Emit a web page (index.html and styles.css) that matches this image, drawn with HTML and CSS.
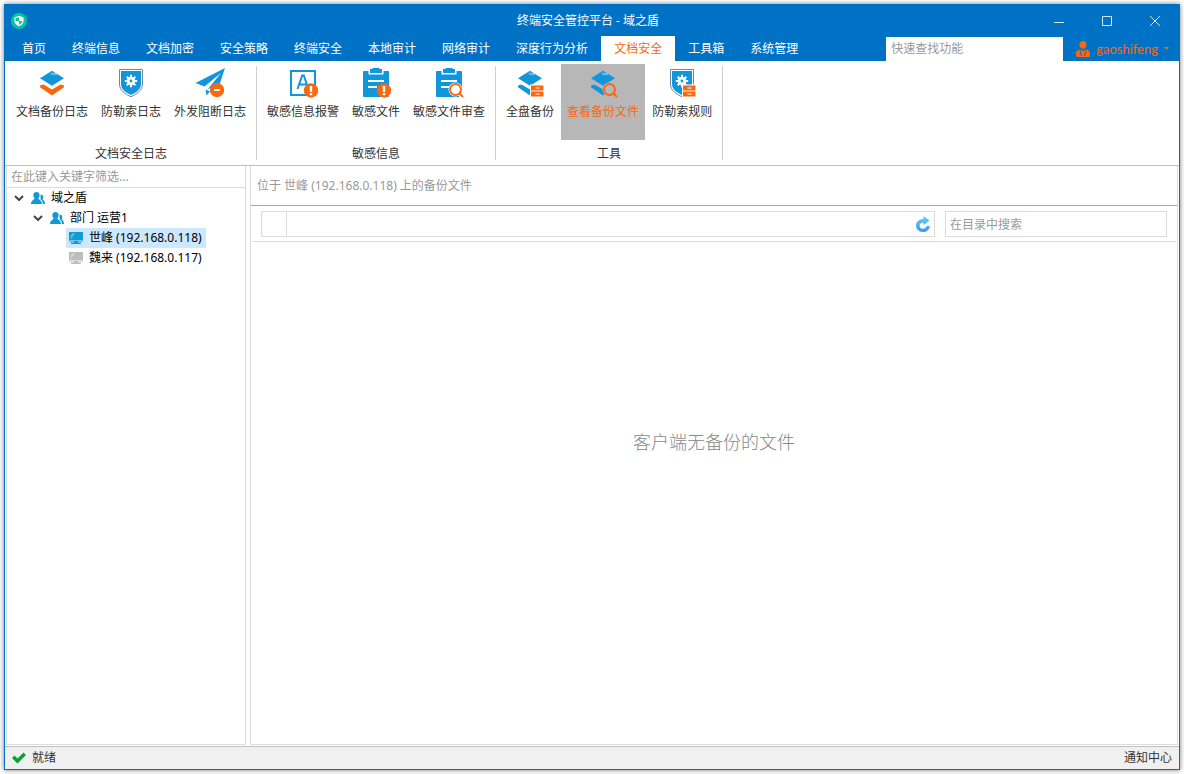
FILE: index.html
```html
<!DOCTYPE html>
<html lang="zh-CN">
<head>
<meta charset="utf-8">
<meta name="viewport" content="width=device-width, initial-scale=1">
<title>终端安全管控平台 - 域之盾</title>
<link rel="stylesheet" href="styles.css">
</head>
<body>
<svg class="defs" aria-hidden="true">
  <defs>
    <linearGradient id="logo-fill" x1="0" y1="0" x2="0" y2="1">
      <stop offset="0" stop-color="#06c98f"/><stop offset="1" stop-color="#08bdb4"/>
    </linearGradient>
    <linearGradient id="refresh-fill" x1="0" y1="0" x2="0" y2="1">
      <stop offset="0" stop-color="#62d0f8"/><stop offset="1" stop-color="#3d97ee"/>
    </linearGradient>
    <g id="sheet">
      <path fill="#1296db" d="M16 3.800 28 11.300 16 18.800 4 11.300Z"/>
      <path stroke="#fff" stroke-width=".6" d="M14.500 6.200l3 1.900M16.500 5.800l3 1.900M18.500 6l2.500 1.600"/>
    </g>
    <path id="layer" d="M4 18.500 7.500 17.500 16 22.400 24.500 17.500 28 18.500V20.200L16 28.500 4 20.200Z"/>
    <g id="shield">
      <path fill="#fff" stroke="#6c86a5" stroke-width="1" d="M4.500 2.500H27.500V17C27.500 23.500 22 27 16 29.700 10 27 4.500 23.500 4.500 17Z"/>
      <path fill="#1296db" d="M6 4H26V17C26 22.500 21 25.700 16 28 11 25.700 6 22.500 6 17Z"/>
      <circle cx="16" cy="14" r="4.200" fill="#fff"/>
      <path stroke="#fff" stroke-width="2" d="M16 7.800V20.200M9.800 14H22.200M11.700 9.700l8.600 8.600M20.300 9.700l-8.600 8.600"/>
      <circle cx="16" cy="14" r="1.400" fill="#1296db"/>
    </g>
    <g id="board">
      <path fill="#1296db" d="M4 4H8.500V7.500H23.500V4H28Q29 4 29 5V29Q29 30 28 30H4Q3 30 3 29V5Q3 4 4 4Z"/>
      <path fill="#1296db" d="M10 2H12.500V1H19.500V2H22V6H10Z"/>
      <path stroke="#fff" stroke-width="2" d="M8 14H24M8 20H17"/>
    </g>
    <g id="alert">
      <circle cx="24" cy="23.500" r="7.200" fill="#fa6711"/>
      <path fill="#fff" d="M22.800 19h2.400v6h-2.400zM22.800 26h2.400v2.200h-2.400z"/>
    </g>
    <g id="lens" fill="none" stroke="#fa6711" stroke-width="2">
      <path d="M26.500 26.500 30 30"/><circle cx="22.500" cy="22.500" r="5.500"/>
    </g>
    <g id="cabinet">
      <path fill="#fa6711" d="M17 18.500h12.500v5h-12.500zM17 24.500h12.500v5h-12.500z"/>
      <path stroke="#fff" stroke-width="1" d="M21.500 21h4M21.500 27h4"/>
    </g>
    <g id="people">
      <path d="M9.500 3.500C12.500 3.500 13 6.500 11.500 8.500 12.500 9.200 14 9.700 14 13H11.800C11.800 10.500 11 9.500 9.600 8.600Z"/>
      <path d="M5.500 1C9.200 1 9.300 5 7.400 7.500 7.600 8.800 11 9.200 11 13H0C0 9.200 3.400 8.800 3.600 7.500 1.700 5 1.800 1 5.500 1Z"/>
    </g>
    <g id="monitor">
      <path d="M0 1H14V9H0ZM0 9.600H14V10.600H9V11.600H12V13H2V11.600H5V10.600H0Z"/>
      <path fill="none" stroke="#fff" stroke-width="1" d="M2 5.500 5 2.500M2 7.500 3 6.500"/>
    </g>
  </defs>
</svg>

<div class="window">
  <header class="titlebar">
    <svg class="logo" viewBox="0 0 16 16" aria-hidden="true">
      <circle cx="8" cy="8" r="8" fill="url(#logo-fill)"/>
      <path fill="#fff" d="M8 2.800 12.500 4.500V8Q12.300 11.500 8 13.200 3.700 11.500 3.500 8V4.500Z"/>
      <path fill="#08c49f" d="M8 4.200V8H4.600V5.300ZM8 8H11.400Q11.200 10.700 8 12Z"/>
    </svg>
    <h1 class="title">终端安全管控平台 - 域之盾</h1>
    <div class="controls">
      <button class="control" aria-label="最小化"><svg viewBox="0 0 10 10"><path d="M0 6.500H10"/></svg></button>
      <button class="control" aria-label="最大化"><svg viewBox="0 0 10 10"><path d="M.5.5H9.500V9.500H.5Z"/></svg></button>
      <button class="control" aria-label="关闭"><svg viewBox="0 0 10 10"><path d="M0 0 10 10M10 0 0 10"/></svg></button>
    </div>
  </header>

  <div class="menubar">
    <nav class="tabs">
      <button class="tab">首页</button>
      <button class="tab">终端信息</button>
      <button class="tab">文档加密</button>
      <button class="tab">安全策略</button>
      <button class="tab">终端安全</button>
      <button class="tab">本地审计</button>
      <button class="tab">网络审计</button>
      <button class="tab">深度行为分析</button>
      <button class="tab active">文档安全</button>
      <button class="tab">工具箱</button>
      <button class="tab">系统管理</button>
    </nav>
    <input class="quick-find" type="text" placeholder="快速查找功能" aria-label="快速查找功能">
    <button class="user">
      <svg class="user-icon" viewBox="0 0 14 16" aria-hidden="true">
        <path fill="#fa6711" d="M7 0C12 0 11.500 7.800 7 7.800S2 0 7 0ZM3.500 8.600 7 10 10.500 8.600 13 9.800Q14 10.500 14 12V14.500Q14 16 12.500 16H1.500Q0 16 0 14.500V12Q0 10.500 1 9.800Z"/>
        <path fill="none" stroke="#0072c6" stroke-width="1" d="M4 9.500 5.500 15M10 9.500 8.500 15"/>
      </svg>
      <span>gaoshifeng</span>
      <svg class="caret" viewBox="0 0 5 3" aria-hidden="true"><path fill="#fa6711" d="M0 0H5L2.500 3Z"/></svg>
    </button>
  </div>

  <div class="ribbon">
    <section class="group">
      <div class="tools">
        <button class="tool"><svg viewBox="0 0 32 32"><use href="#layer" fill="#fa6711"/><use href="#sheet"/></svg>文档备份日志</button>
        <button class="tool"><svg viewBox="0 0 32 32"><use href="#shield"/></svg>防勒索日志</button>
        <button class="tool"><svg viewBox="0 0 32 32">
          <path fill="#1296db" d="M31 1 25 19 18 20 13.500 22.500 27 6 10.500 19.500 1.500 16ZM11.500 22.500 16 24.500 12.500 28.500Z"/>
          <circle cx="23" cy="23" r="7.200" fill="#fa6711"/><path stroke="#fff" stroke-width="2" d="M20 23h6"/></svg>外发阻断日志</button>
      </div>
      <h2 class="group-name">文档安全日志</h2>
    </section>
    <section class="group">
      <div class="tools">
        <button class="tool"><svg viewBox="0 0 32 32">
          <path fill="none" stroke="#1296db" stroke-width="2" d="M4 4H28V28H4Z"/>
          <path fill="none" stroke="#1296db" stroke-width="2" d="M10.500 22 15.200 8.500H16.800L21.500 22M12 17.500H20"/>
          <use href="#alert"/></svg>敏感信息报警</button>
        <button class="tool"><svg viewBox="0 0 32 32"><use href="#board"/><use href="#alert"/></svg>敏感文件</button>
        <button class="tool"><svg viewBox="0 0 32 32"><use href="#board"/><circle cx="22.500" cy="22.500" r="7" fill="#fff"/><path stroke="#fff" stroke-width="4" d="M26 26 30 31"/><use href="#lens"/></svg>敏感文件审查</button>
      </div>
      <h2 class="group-name">敏感信息</h2>
    </section>
    <section class="group">
      <div class="tools">
        <button class="tool"><svg viewBox="0 0 32 32"><use href="#layer" fill="#1296db"/><use href="#sheet"/><path fill="#fff" d="M16 17.500h14v13h-14z"/><use href="#cabinet"/></svg>全盘备份</button>
        <button class="tool selected"><svg viewBox="0 0 32 32"><use href="#layer" fill="#1296db"/><use href="#sheet"/><circle cx="22.500" cy="22.500" r="7" fill="#b7b7b7"/><use href="#lens"/></svg>查看备份文件</button>
        <button class="tool"><svg viewBox="0 0 32 32"><use href="#shield"/><path fill="#fff" d="M16 17.500h14v13h-14z"/><use href="#cabinet"/></svg>防勒索规则</button>
      </div>
      <h2 class="group-name">工具</h2>
    </section>
  </div>

  <main class="workspace">
    <aside class="sidebar">
      <input class="filter" type="text" placeholder="在此键入关键字筛选..." aria-label="在此键入关键字筛选">
      <ul class="tree">
        <li>
          <button class="node"><svg class="chevron" viewBox="0 0 10 6"><path d="M1 1 5 5 9 1"/></svg><svg class="node-icon" viewBox="0 0 14 14"><use href="#people"/></svg>域之盾</button>
          <ul>
            <li>
              <button class="node"><svg class="chevron" viewBox="0 0 10 6"><path d="M1 1 5 5 9 1"/></svg><svg class="node-icon" viewBox="0 0 14 14"><use href="#people"/></svg>部门 运营1</button>
              <ul class="leaves">
                <li><button class="node leaf current"><svg class="node-icon" viewBox="0 0 14 14"><use href="#monitor"/></svg>世峰 (192.168.0.118)</button></li>
                <li><button class="node leaf offline"><svg class="node-icon" viewBox="0 0 14 14"><use href="#monitor"/></svg>魏来 (192.168.0.117)</button></li>
              </ul>
            </li>
          </ul>
        </li>
      </ul>
    </aside>

    <section class="content">
      <p class="location">位于 世峰 (192.168.0.118) 上的备份文件</p>
      <div class="pathbar">
        <div class="path">
          <span class="path-icon"></span>
          <input class="path-input" type="text" aria-label="路径">
          <button class="refresh" aria-label="刷新">
            <svg viewBox="0 0 16 16">
              <path fill="url(#refresh-fill)" d="M8.500 0 14.500 4.500 8.500 9V6.400C3.300 6.400 3.500 12.800 8 12.800 10 12.800 11.300 11.500 11.700 9.800L15 10.200C14.300 13.800 11.500 16 8 16 3.500 16 1 12.800 1 9.500 1 5.500 4.500 3 8.500 3Z"/>
            </svg>
          </button>
        </div>
        <input class="search" type="text" placeholder="在目录中搜索" aria-label="在目录中搜索">
      </div>
      <div class="empty">客户端无备份的文件</div>
    </section>
  </main>

  <footer class="statusbar">
    <span class="ready">
      <svg class="check" viewBox="0 0 14 12" aria-hidden="true"><path fill="#0d9f33" d="M0 6 2.500 3.500 5.500 6.500 11.500.5 14 3 5.500 11.500Z"/></svg>
      就绪
    </span>
    <button class="notice">通知中心</button>
  </footer>
</div>
</body>
</html>
```

FILE: styles.css
```css
* {
  box-sizing: border-box;
}

body {
  margin: 0;
  padding: 4px;
  height: 100vh;
  background: #fff;
  color: #333;
  font: 12px/20px "Noto Sans", "Noto Sans CJK SC", sans-serif;
}

button,
input {
  margin: 0;
  padding: 0;
  border: 0;
  border-radius: 0;
  background: none;
  color: inherit;
  font: inherit;
}

input {
  min-width: 0;
  outline: 0;
}

input::placeholder {
  color: #999;
  opacity: 1;
}

h1,
h2,
p,
ul {
  margin: 0;
  padding: 0;
  font: inherit;
  list-style: none;
}

svg {
  display: block;
  flex: none;
}

.defs {
  position: absolute;
  width: 0;
  height: 0;
}

.window {
  display: flex;
  flex-direction: column;
  height: 100%;
  border: 1px solid #0072c6;
  background: #fff;
  box-shadow: 0 0 5px #777;
}

/* Title bar */
.titlebar {
  display: grid;
  grid-template-columns: 1fr auto 1fr;
  align-items: center;
  height: 31px;
  padding-left: 6px;
  background: #0072c6;
  color: #fff;
}

.title {
  padding-right: 14px;
  line-height: 18px;
}

.logo {
  width: 16px;
  height: 16px;
}

.controls {
  display: flex;
  justify-content: flex-end;
}

.control {
  display: grid;
  place-items: center;
  width: 48px;
  height: 30px;
}

.control svg {
  width: 10px;
  height: 10px;
  fill: none;
  stroke: #d5e6f4;
}

/* Tabs */
.menubar {
  display: flex;
  align-items: stretch;
  height: 25px;
  padding-left: 4px;
  background: #0072c6;
  color: #fff;
}

.tabs {
  display: flex;
  flex: 1;
}

.tab {
  padding: 1px 13px 0;
  line-height: 24px;
  white-space: nowrap;
}

.tab.active {
  background: #fff;
  color: #fa6711;
}

.quick-find {
  width: 177px;
  margin-top: 1px;
  padding: 0 5px;
  background: #fff;
  color: #333;
}

.user {
  display: flex;
  align-items: center;
  gap: 6px;
  padding: 0 10px 0 13px;
  color: #fa6711;
  font-family: Lato, sans-serif;
  font-size: 13px;
}

.user-icon {
  width: 14px;
  height: 16px;
}

.caret {
  width: 5px;
  height: 3px;
}

/* Ribbon */
.ribbon {
  display: flex;
  padding: 3px 0 1px 1px;
  border-bottom: 1px solid #c0c0c0;
}

.group {
  display: flex;
  flex-direction: column;
  justify-content: space-between;
  height: 100px;
  padding: 0 4px;
  border-right: 1px solid;
  border-image: linear-gradient(transparent 3px, #d0d0d0 3px 95px, transparent 95px) 1;
}

.tools {
  display: flex;
  gap: 1px;
}

.tool {
  display: flex;
  flex-direction: column;
  align-items: center;
  gap: 3px;
  height: 76px;
  padding: 3px 6px;
  white-space: nowrap;
}

.tool svg {
  width: 32px;
  height: 32px;
}

.tool.selected {
  background: #b7b7b7;
  color: #fa6711;
}

.group-name {
  text-align: center;
}

/* Workspace */
.workspace {
  display: flex;
  flex: 1;
  gap: 4px;
  min-height: 0;
  padding: 0 1px 1px;
}

.sidebar {
  display: flex;
  flex-direction: column;
  width: 240px;
  border: 1px solid #dcdcdc;
  border-top: 0;
}

.filter {
  height: 22px;
  padding: 0 4px;
  border-bottom: 1px solid #dcdcdc;
}

.tree {
  color: #000;
}

.tree ul {
  padding-left: 19px;
}

.node {
  display: flex;
  align-items: center;
  gap: 6px;
  height: 20px;
  padding: 0 4px 0 7px;
  white-space: nowrap;
}

.chevron {
  width: 10px;
  height: 6px;
  margin-right: 1px;
  fill: none;
  stroke: #444;
  stroke-width: 2;
}

.node-icon {
  width: 14px;
  height: 14px;
  fill: #0f9bd3;
}

.tree .leaves {
  padding-left: 40px;
}

.leaf {
  padding-left: 3px;
}

.current {
  background: #cce8ff;
}

.offline .node-icon {
  fill: #bdbdbd;
}

.content {
  display: flex;
  flex: 1;
  flex-direction: column;
  min-width: 0;
  border: 1px solid #dcdcdc;
  border-top: 0;
}

.location {
  padding: 10px 6px 9px;
  border-bottom: 1px solid #a6a6a6;
  color: #999;
}

.pathbar {
  display: flex;
  gap: 10px;
  margin: 0 1px;
  padding: 5px 9px 4px;
  border-bottom: 1px solid #dcdcdc;
}

.path {
  display: flex;
  flex: 1;
  height: 26px;
  border: 1px solid #dcdcdc;
}

.path-icon {
  width: 25px;
  border-right: 1px solid #dcdcdc;
}

.path-input {
  flex: 1;
}

.refresh {
  padding: 0 3px;
}

.refresh svg {
  width: 16px;
  height: 16px;
}

.search {
  width: 222px;
  height: 26px;
  padding: 0 4px;
  border: 1px solid #dcdcdc;
}

.empty {
  display: grid;
  flex: 1;
  place-items: center;
  padding-bottom: 102px;
  color: #888;
  font-size: 18px;
  font-weight: 300;
}

/* Status bar */
.statusbar {
  display: flex;
  align-items: center;
  justify-content: space-between;
  height: 23px;
  padding: 0 7px;
  border-top: 1px solid #c0c0c0;
  background: #f0f0f0;
}

.ready {
  display: flex;
  align-items: center;
  gap: 6px;
}

.check {
  width: 14px;
  height: 12px;
}
```
